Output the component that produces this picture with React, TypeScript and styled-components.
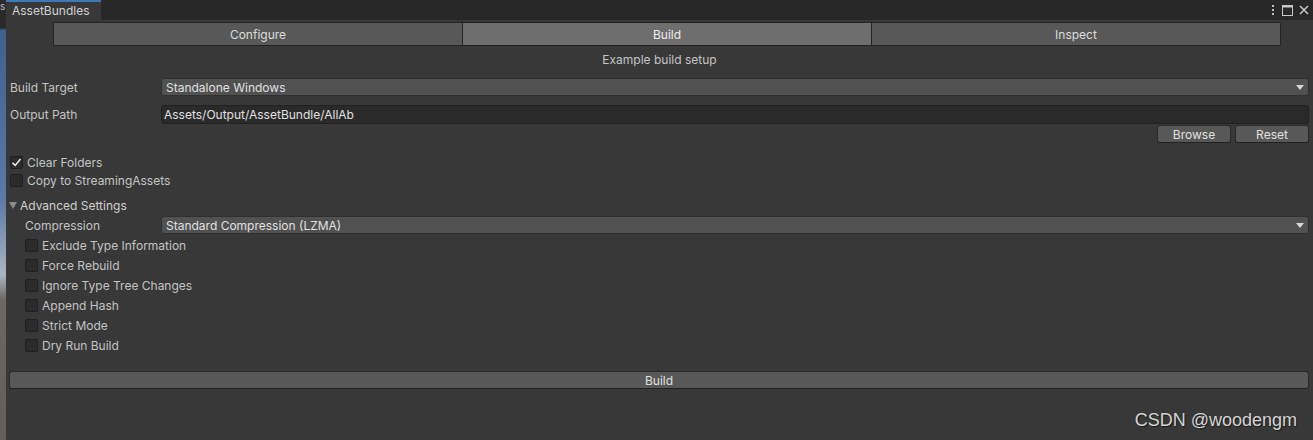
import { FC } from 'react';
import styled, { createGlobalStyle } from 'styled-components';

const GlobalStyle = createGlobalStyle`
    html, body {
        margin: 0;
        padding: 0;
        background: #383838;
    }
    body {
        font-family: Inter, "Noto Sans", sans-serif;
        font-size: 12px;
        color: #c4c4c4;
    }
`;

const toggles = [
    'Exclude Type Information',
    'Force Rebuild',
    'Ignore Type Tree Changes',
    'Append Hash',
    'Strict Mode',
    'Dry Run Build',
];

const Page = styled.div`
    position: relative;
    display: flex;
    width: 1313px;
    height: 440px;
    overflow: hidden;
`;

const SceneStrip = styled.div`
    width: 6px;
    flex: none;
    display: flex;
    flex-direction: column;
    background: linear-gradient(
        180deg,
        #2a2a2a 0px,
        #2a2a2a 28px,
        #3f5f8f 30px,
        #5d7aa5 200px,
        #a9b5c4 275px,
        #6f675f 300px,
        #655d56 440px
    );

    span {
        font-size: 10px;
        color: #bbb;
        line-height: 12px;
    }
`;

const Window = styled.div`
    flex: 1;
    display: flex;
    flex-direction: column;
    background: #383838;
`;

const TabBar = styled.div`
    height: 20px;
    display: flex;
    align-items: stretch;
    background: #282828;
`;

const Tab = styled.div`
    width: 95px;
    box-sizing: border-box;
    border-top: 2px solid #3a79bb;
    background: #383838;
    padding-left: 6px;
    line-height: 18px;
    color: #d2d2d2;
`;

const TabIcons = styled.div`
    margin-left: auto;
    display: flex;
    align-items: center;
    gap: 6px;
    padding-right: 4px;
`;

const Content = styled.div`
    flex: 1;
    display: flex;
    flex-direction: column;
    align-items: stretch;
    padding: 0 4px;
`;

const Toolbar = styled.div`
    display: flex;
    margin: 2px 28px 0 43px;
    height: 24px;
    box-sizing: border-box;
    border: 1px solid #232323;
    border-radius: 2px;
    overflow: hidden;
`;

const ToolbarTab = styled.div<{ $active?: boolean }>`
    flex: 1;
    display: flex;
    align-items: center;
    justify-content: center;
    background: ${(p) => (p.$active ? '#6e6e6e' : '#585858')};
    color: ${(p) => (p.$active ? '#eeeeee' : '#dcdcdc')};
    & + & {
        border-left: 1px solid #232323;
    }
`;

const Caption = styled.div`
    height: 22px;
    margin-top: 2px;
    display: flex;
    align-items: center;
    justify-content: center;
`;

const FieldRow = styled.div<{ $top: number; $indent?: number }>`
    display: flex;
    align-items: center;
    height: 18px;
    margin-top: ${(p) => p.$top}px;
    padding-left: ${(p) => p.$indent ?? 0}px;
`;

const Label = styled.div<{ $width?: number }>`
    width: ${(p) => p.$width ?? 151}px;
    flex: none;
`;

const Dropdown = styled.div`
    flex: 1;
    height: 18px;
    box-sizing: border-box;
    display: flex;
    align-items: center;
    padding: 0 4px;
    background: #515151;
    border: 1px solid #303030;
    border-radius: 3px;
    color: #e0e0e0;
`;

const Arrow = styled.span`
    margin-left: auto;
    width: 0;
    height: 0;
    border-left: 4px solid transparent;
    border-right: 4px solid transparent;
    border-top: 5px solid #d8d8d8;
`;

const TextField = styled.div`
    flex: 1;
    height: 19px;
    box-sizing: border-box;
    display: flex;
    align-items: center;
    padding: 0 2px;
    background: #2a2a2a;
    border: 1px solid #212121;
    border-radius: 3px;
    color: #e0e0e0;
`;

const ButtonRow = styled.div`
    display: flex;
    justify-content: flex-end;
    gap: 4px;
    margin-top: 2px;
`;

const Button = styled.div<{ $width?: number }>`
    width: ${(p) => (p.$width ? `${p.$width}px` : 'auto')};
    flex: none;
    height: 18px;
    box-sizing: border-box;
    display: flex;
    align-items: center;
    justify-content: center;
    background: #585858;
    border: 1px solid #2a2a2a;
    border-bottom-color: #222;
    border-radius: 3px;
    color: #e0e0e0;
`;

const ToggleRow = styled.div<{ $top: number; $indent?: number }>`
    display: flex;
    align-items: center;
    gap: 4px;
    height: 16px;
    margin-top: ${(p) => p.$top}px;
    padding-left: ${(p) => p.$indent ?? 0}px;
`;

const Box = styled.div`
    width: 13px;
    height: 13px;
    box-sizing: border-box;
    background: #2b2b2b;
    border: 1px solid #1f1f1f;
    border-radius: 2px;
    display: flex;
    align-items: center;
    justify-content: center;
`;

const Foldout = styled.div`
    display: flex;
    align-items: center;
    gap: 3px;
    height: 16px;
    margin-top: 9px;
    color: #d0d0d0;
`;

const FoldArrow = styled.span`
    width: 0;
    height: 0;
    margin-left: -1px;
    border-left: 4px solid transparent;
    border-right: 4px solid transparent;
    border-top: 7px solid #8a8a8a;
`;

const BuildButton = styled(Button)`
    margin-top: 18px;
    margin-left: -1px;
`;

const Watermark = styled.div`
    position: absolute;
    right: 16px;
    bottom: 9px;
    font-family: "Liberation Sans", Arial, sans-serif;
    font-size: 18px;
    color: #d4d4d4;
    text-shadow: 1px 1px 1px #1a1a1a;
`;

const Check: FC = () => (
    <svg width="11" height="11" viewBox="0 0 11 11">
        <path d="M1.5 5.8 L4.2 8.4 L9.5 2" fill="none" stroke="#e8e8e8" strokeWidth="1.6" />
    </svg>
);

const App: FC = () => {
    return (
        <Page>
            <GlobalStyle />
            <SceneStrip>
                <span>s</span>
            </SceneStrip>
            <Window>
                <TabBar>
                    <Tab>AssetBundles</Tab>
                    <TabIcons>
                        <svg width="6" height="12" viewBox="0 0 6 12">
                            <rect x="2" y="1" width="2" height="2" fill="#bdbdbd" />
                            <rect x="2" y="5" width="2" height="2" fill="#bdbdbd" />
                            <rect x="2" y="9" width="2" height="2" fill="#bdbdbd" />
                        </svg>
                        <svg width="11" height="11" viewBox="0 0 11 11">
                            <rect x="0.5" y="0.5" width="10" height="10" fill="none" stroke="#c8c8c8" />
                            <rect x="0" y="0" width="11" height="2.5" fill="#c8c8c8" />
                        </svg>
                        <svg width="10" height="10" viewBox="0 0 10 10">
                            <path d="M1 1 L9 9 M9 1 L1 9" stroke="#c8c8c8" strokeWidth="1.5" />
                        </svg>
                    </TabIcons>
                </TabBar>
                <Content>
                    <Toolbar>
                        <ToolbarTab>Configure</ToolbarTab>
                        <ToolbarTab $active>Build</ToolbarTab>
                        <ToolbarTab>Inspect</ToolbarTab>
                    </Toolbar>
                    <Caption>Example build setup</Caption>
                    <FieldRow $top={8}>
                        <Label>Build Target</Label>
                        <Dropdown>
                            Standalone Windows
                            <Arrow />
                        </Dropdown>
                    </FieldRow>
                    <FieldRow $top={9}>
                        <Label>Output Path</Label>
                        <TextField>Assets/Output/AssetBundle/AllAb</TextField>
                    </FieldRow>
                    <ButtonRow>
                        <Button $width={74}>Browse</Button>
                        <Button $width={74}>Reset</Button>
                    </ButtonRow>
                    <ToggleRow $top={11}>
                        <Box>
                            <Check />
                        </Box>
                        Clear Folders
                    </ToggleRow>
                    <ToggleRow $top={2}>
                        <Box />
                        Copy to StreamingAssets
                    </ToggleRow>
                    <Foldout>
                        <FoldArrow />
                        Advanced Settings
                    </Foldout>
                    <FieldRow $top={3} $indent={15}>
                        <Label $width={136}>Compression</Label>
                        <Dropdown>
                            Standard Compression (LZMA)
                            <Arrow />
                        </Dropdown>
                    </FieldRow>
                    {toggles.map((t, i) => (
                        <ToggleRow key={t} $top={i === 0 ? 3 : 4} $indent={15}>
                            <Box />
                            {t}
                        </ToggleRow>
                    ))}
                    <BuildButton>Build</BuildButton>
                </Content>
            </Window>
            <Watermark>CSDN @woodengm</Watermark>
        </Page>
    );
};

export default App;
